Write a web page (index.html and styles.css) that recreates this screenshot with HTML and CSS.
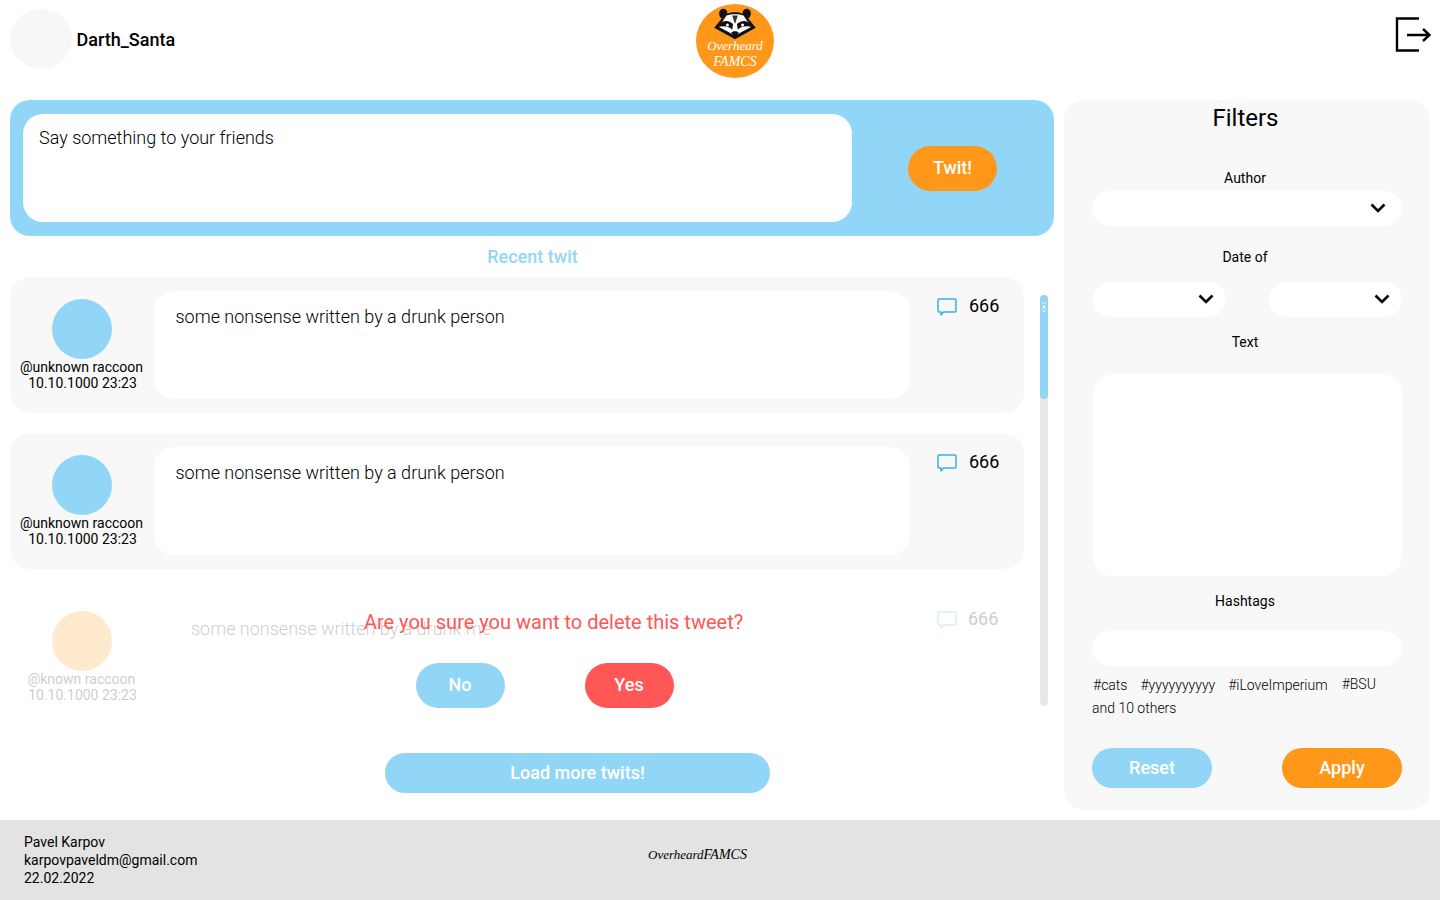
FILE: index.html
```html
<!DOCTYPE html>
<html lang="en">
<head>
<meta charset="utf-8">
<title>Overheard FAMCS</title>
<link rel="stylesheet" href="styles.css">
</head>
<body>
<header class="header">
  <div class="user">
    <div class="user-avatar"></div>
    <span class="user-name">Darth_Santa</span>
  </div>
  <div class="logo">
    <svg class="logo-face" viewBox="0 0 48 36" width="46" height="34">
      <path d="M8 3 C11 -1 16 1 16 6 C21 4 27 4 32 6 C32 1 37 -1 40 3 C42 6 40 10 38 11 L46 21 L24 33 L2 21 L10 11 C8 10 6 6 8 3Z" fill="#111"/>
      <path d="M15 8 C20 6 28 6 33 8 L41 20 L24 29 L7 20Z" fill="#fff"/>
      <path d="M6 20 C10 13 16 12 22 17 L21 23 C17 19 12 19 6 20Z M42 20 C38 13 32 12 26 17 L27 23 C31 19 36 19 42 20Z" fill="#111"/>
      <path d="M21 8 L24 17 L27 8Z" fill="#333"/>
      <path d="M20 26 L24 32 L28 26 C26 24 22 24 20 26Z" fill="#111"/>
      <circle cx="16" cy="18" r="1.6" fill="#fff"/>
      <circle cx="32" cy="18" r="1.6" fill="#fff"/>
    </svg>
    <span class="logo-line1">Overheard</span>
    <span class="logo-line2">FAMCS</span>
  </div>
  <svg class="exit" viewBox="0 0 36 36" width="36" height="36" fill="none" stroke="#000" stroke-width="2.4">
    <path d="M24 1.5 H2 V33.5 H24"/>
    <path d="M12 18 H34 M28 12 L34.500 18 L28 24"/>
  </svg>
</header>

<main class="main">
  <section class="left">
    <form class="composer">
      <div class="composer-box">Say something to your friends</div>
      <button class="btn btn-orange btn-twit" type="button">Twit!</button>
    </form>
    <h2 class="recent">Recent twit</h2>
    <div class="feed">
      <div class="list">
        <article class="card">
          <div class="author">
            <div class="avatar"></div>
            <div class="meta">@unknown raccoon<span class="meta-date">10.10.1000 23:23</span></div>
          </div>
          <div class="bubble">some nonsense written by a drunk person</div>
          <div class="count">
            <svg class="comment" viewBox="0 0 20 18" width="20" height="18" fill="none" stroke="#3aaeea" stroke-width="1.5" stroke-linejoin="round"><path d="M2 1 H18 Q19 1 19 2 V13 Q19 14 18 14 H6.500 L4 17 V14 H2 Q1 14 1 13 V2 Q1 1 2 1Z"/></svg>
            <span>666</span>
          </div>
        </article>
        <article class="card">
          <div class="author">
            <div class="avatar"></div>
            <div class="meta">@unknown raccoon<span class="meta-date">10.10.1000 23:23</span></div>
          </div>
          <div class="bubble">some nonsense written by a drunk person</div>
          <div class="count">
            <svg class="comment" viewBox="0 0 20 18" width="20" height="18" fill="none" stroke="#3aaeea" stroke-width="1.5" stroke-linejoin="round"><path d="M2 1 H18 Q19 1 19 2 V13 Q19 14 18 14 H6.500 L4 17 V14 H2 Q1 14 1 13 V2 Q1 1 2 1Z"/></svg>
            <span>666</span>
          </div>
        </article>
        <div class="deleting">
          <article class="card card-faded">
            <div class="author">
              <div class="avatar avatar-own"></div>
              <div class="meta">@known raccoon<span class="meta-date">10.10.1000 23:23</span></div>
            </div>
            <div class="bubble bubble-own">some nonsense written by a drunk me</div>
            <div class="count">
              <svg class="comment" viewBox="0 0 20 18" width="20" height="18" fill="none" stroke="#3aaeea" stroke-width="1.5" stroke-linejoin="round"><path d="M2 1 H18 Q19 1 19 2 V13 Q19 14 18 14 H6.500 L4 17 V14 H2 Q1 14 1 13 V2 Q1 1 2 1Z"/></svg>
              <span>666</span>
            </div>
          </article>
          <div class="confirm">
            <p class="confirm-text">Are you sure you want to delete this tweet?</p>
            <div class="confirm-actions">
              <button class="btn btn-blue btn-confirm" type="button">No</button>
              <button class="btn btn-red btn-confirm" type="button">Yes</button>
            </div>
          </div>
        </div>
      </div>
      <div class="scrollbar">
        <div class="thumb">
          <svg class="grip" viewBox="0 0 6 12" width="6" height="12" fill="none" stroke="#fff" stroke-width="1"><path d="M1 3 L3 1 L5 3 M1 9 L3 11 L5 9"/><circle cx="3" cy="6" r="1.500" fill="#fff" stroke="none"/></svg>
        </div>
      </div>
    </div>
    <button class="btn btn-blue btn-load" type="button">Load more twits!</button>
  </section>

  <aside class="filters">
    <h2 class="filters-title">Filters</h2>
    <div class="label label-author">Author</div>
    <div class="field field-author">
      <svg class="chev" viewBox="0 0 16 10" width="16" height="10" fill="none" stroke="#000" stroke-width="2.600"><path d="M1.500 1.500 L8 8 L14.500 1.500"/></svg>
    </div>
    <div class="label label-date">Date of</div>
    <div class="date-row">
      <div class="field field-date"><svg class="chev" viewBox="0 0 16 10" width="16" height="10" fill="none" stroke="#000" stroke-width="2.600"><path d="M1.500 1.500 L8 8 L14.500 1.500"/></svg></div>
      <div class="field field-date"><svg class="chev" viewBox="0 0 16 10" width="16" height="10" fill="none" stroke="#000" stroke-width="2.600"><path d="M1.500 1.500 L8 8 L14.500 1.500"/></svg></div>
    </div>
    <div class="label label-text">Text</div>
    <div class="text-box"></div>
    <div class="label label-tags">Hashtags</div>
    <div class="field field-tags"></div>
    <div class="tags">
      <span>#cats</span><span>#yyyyyyyyyy</span><span>#iLoveImperium</span><span class="tag-up">#BSU</span>
    </div>
    <div class="others">and 10 others</div>
    <div class="filter-actions">
      <button class="btn btn-blue btn-filter" type="button">Reset</button>
      <button class="btn btn-orange btn-filter" type="button">Apply</button>
    </div>
  </aside>
</main>

<footer class="footer">
  <div class="contact">Pavel Karpov<br>karpovpaveldm@gmail.com<br>22.02.2022</div>
  <div class="footer-logo">Overheard<span class="footer-famcs">FAMCS</span></div>
</footer>
</body>
</html>
```
FILE: styles.css
```css
* { box-sizing: border-box; }
html, body { margin: 0; padding: 0; }
body {
  width: 1440px;
  height: 900px;
  overflow: hidden;
  background: #fff;
  color: #000;
  font-family: Roboto, "Liberation Sans", sans-serif;
  display: flex;
  flex-direction: column;
}

/* header */
.header {
  height: 80px;
  flex: none;
  display: grid;
  grid-template-columns: 685px 78px 1fr;
  column-gap: 0;
  align-items: center;
  padding: 0 9px 0 10px;
}
.user { display: flex; align-items: center; gap: 5px; padding-bottom: 2px; }
.user-avatar { width: 62px; height: 60px; border-radius: 50%; background: #f7f7f7; }
.user-name { font-size: 18px; font-weight: 500; margin-left: -0.5px; }
.logo {
  width: 78px;
  height: 74px;
  margin-top: 2px;
  margin-left: 1px;
  border-radius: 50%;
  background: #ff981a;
  color: #fff;
  display: flex;
  flex-direction: column;
  align-items: center;
  font-family: "Liberation Serif", serif;
  font-style: italic;
}
.logo-face { margin-top: 4px; flex: none; }
.logo-line1 { font-size: 13px; line-height: 13px; margin-top: -3px; }
.logo-line2 { font-size: 14px; line-height: 17px; margin-top: 1px; }
.exit { justify-self: end; margin-top: -10px; }

/* main */
.main {
  flex: 1;
  display: flex;
  gap: 10px;
  padding: 20px 10px 10px;
  min-height: 0;
}
.left { width: 1044px; flex: none; display: flex; flex-direction: column; }

.composer {
  height: 136px;
  flex: none;
  background: #92d6f7;
  border-radius: 20px;
  padding: 14px 0 14px 13px;
  display: flex;
  align-items: center;
  gap: 56px;
}
.composer-box {
  width: 829px;
  height: 108px;
  background: #fff;
  border-radius: 20px;
  padding: 13px 16px;
  font-size: 18px;
  font-weight: 300;
  line-height: 22px;
}
.btn {
  border: 0;
  color: #fff;
  font-family: inherit;
  font-size: 18px;
  font-weight: 500;
  padding: 0 0 2px;
}
.btn-orange { background: #ff981a; }
.btn-blue { background: #92d6f7; }
.btn-red { background: #ff5656; }
.btn-twit { width: 89px; height: 45px; border-radius: 23px; }

.recent {
  margin: 10px 0 9px;
  height: 22px;
  width: 1045px;
  text-align: center;
  font-size: 18px;
  line-height: 22px;
  font-weight: 500;
  color: #92d6f7;
}

.feed { display: flex; gap: 16px; height: 448px; flex: none; }
.list { width: 1014px; flex: none; display: flex; flex-direction: column; gap: 20px; }

.card {
  height: 136px;
  flex: none;
  background: #f8f8f8;
  border-radius: 20px;
  display: flex;
  padding: 14px 0;
}
.author {
  width: 144px;
  flex: none;
  padding-top: 8px;
  display: flex;
  flex-direction: column;
  align-items: center;
}
.avatar { width: 60px; height: 60px; border-radius: 50%; background: #92d6f7; }
.avatar-own { background: #ff981a; }
.meta { font-size: 14px; line-height: 16px; text-align: center; margin-left: -1px; }
.meta-date { display: block; padding-left: 2px; }
.bubble {
  width: 756px;
  height: 108px;
  flex: none;
  background: #fff;
  border-radius: 20px;
  padding: 15px 21.500px;
  font-size: 18px;
  font-weight: 300;
  line-height: 22px;
}
.count {
  display: flex;
  align-items: flex-start;
  gap: 12px;
  padding-left: 27px;
  padding-top: 4px;
  font-size: 18px;
  line-height: 22px;
}
.comment { margin-top: 3px; flex: none; }

.deleting { position: relative; height: 136px; flex: none; }
.card-faded { background: #fff; opacity: 0.2; }
.bubble-own { padding-left: 37px; padding-top: 15px; }
.card-faded .count { padding-top: 5px; padding-left: 27px; gap: 11px; }
.confirm {
  position: absolute;
  left: 320px;
  top: 19px;
  width: 447px;
  display: flex;
  flex-direction: column;
  align-items: center;
}
.confirm-text {
  margin: 0;
  font-size: 20px;
  line-height: 28px;
  color: #ff5656;
  white-space: nowrap;
}
.confirm-actions { display: flex; gap: 80px; margin-top: 27px; margin-left: -18px; }
.btn-confirm { width: 89px; height: 45px; border-radius: 23px; }

.scrollbar {
  width: 8px;
  height: 411px;
  margin-top: 18px;
  flex: none;
  background: #e8e8e8;
  border-radius: 4px;
}
.thumb {
  height: 104px;
  background: #92d6f7;
  border-radius: 4px;
  display: flex;
  justify-content: center;
  padding-top: 6px;
}
.grip { flex: none; }

.btn-load {
  width: 385px;
  height: 40px;
  flex: none;
  margin: 28px 0 0 375px;
  border-radius: 20px;
}

/* filters */
.filters {
  width: 366px;
  flex: none;
  background: #f8f8f8;
  border-radius: 20px;
  padding: 0 28px;
  display: flex;
  flex-direction: column;
}
.filters-title {
  margin: 4px 0 0;
  width: 307px;
  text-align: center;
  font-size: 24px;
  line-height: 28px;
  font-weight: 400;
}
.label { width: 306px; text-align: center; font-size: 14px; line-height: 16px; }
.label-author { margin-top: 38px; }
.field { background: #fff; border-radius: 18px; height: 35px; position: relative; display: flex; align-items: center; justify-content: flex-end; }
.chev { margin-bottom: 2px; }
.field-author { width: 310px; margin-top: 5px; padding-right: 16px; }
.label-date { margin-top: 23px; }
.date-row { display: flex; justify-content: space-between; width: 310px; margin-top: 17px; padding-left: 1px; }
.field-date { width: 133px; padding-right: 12px; }
.label-text { margin-top: 17px; }
.text-box { width: 309px; height: 202px; margin: 24px 0 0 1px; background: #fff; border-radius: 20px; }
.label-tags { margin-top: 17px; }
.field-tags { width: 310px; margin-top: 22px; }
.tags {
  display: flex;
  gap: 13px;
  margin-top: 11px;
  padding-left: 1px;
  font-size: 14px;
  font-weight: 300;
  line-height: 16px;
  color: #000;
}
.tag-up { margin-top: -1px; margin-left: 1px; }
.others { font-size: 14px; font-weight: 300; line-height: 16px; margin-top: 7px; }
.filter-actions { display: flex; justify-content: space-between; width: 310px; margin-top: 32px; }
.btn-filter { width: 120px; height: 40px; border-radius: 20px; }

/* footer */
.footer {
  height: 80px;
  flex: none;
  background: #e3e3e3;
  display: flex;
  align-items: center;
  padding: 0 0 0 24px;
  position: relative;
}
.contact { width: 624px; font-size: 14px; line-height: 18px; flex: none; }
.footer-logo {
  font-family: "Liberation Serif", serif;
  font-style: italic;
  font-size: 13px;
  margin-top: -10px;
  letter-spacing: 0;
}
.footer-famcs { font-size: 14px; }
```
